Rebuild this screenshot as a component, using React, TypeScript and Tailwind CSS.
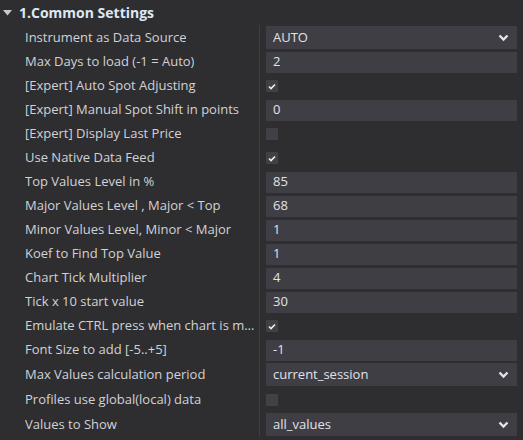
import React from 'react';

type Row =
  | { label: string; kind: 'select'; value: string }
  | { label: string; kind: 'input'; value: string }
  | { label: string; kind: 'check'; checked: boolean };

const rows: Row[] = [
  { label: 'Instrument as Data Source', kind: 'select', value: 'AUTO' },
  { label: 'Max Days to load (-1 = Auto)', kind: 'input', value: '2' },
  { label: '[Expert] Auto Spot Adjusting', kind: 'check', checked: true },
  { label: '[Expert] Manual Spot Shift in points', kind: 'input', value: '0' },
  { label: '[Expert] Display Last Price', kind: 'check', checked: false },
  { label: 'Use Native Data Feed', kind: 'check', checked: true },
  { label: 'Top Values Level in %', kind: 'input', value: '85' },
  { label: 'Major Values Level , Major < Top', kind: 'input', value: '68' },
  { label: 'Minor Values Level, Minor < Major', kind: 'input', value: '1' },
  { label: 'Koef to Find Top Value', kind: 'input', value: '1' },
  { label: 'Chart Tick Multiplier', kind: 'input', value: '4' },
  { label: 'Tick x 10 start value', kind: 'input', value: '30' },
  { label: 'Emulate CTRL press when chart is moved', kind: 'check', checked: true },
  { label: 'Font Size to add [-5..+5]', kind: 'input', value: '-1' },
  { label: 'Max Values calculation period', kind: 'select', value: 'current_session' },
  { label: 'Profiles use global(local) data', kind: 'check', checked: false },
  { label: 'Values to Show', kind: 'select', value: 'all_values' },
];

function Chevron() {
  return (
    <svg width="11" height="8" viewBox="0 0 11 8" className="shrink-0">
      <polyline points="1.5,1.5 5.5,5.5 9.5,1.5" fill="none" stroke="#e4e4e8" strokeWidth="2.4" />
    </svg>
  );
}

function Check({ checked }: { checked: boolean }) {
  return (
    <div className="w-3 h-3 bg-[#414047] flex items-center justify-center">
      {checked && (
        <svg width="8" height="7" viewBox="0 0 8 7">
          <polyline points="1,3.5 3,5.5 7,1.5" fill="none" stroke="#eeeeee" strokeWidth="1.6" />
        </svg>
      )}
    </div>
  );
}

function Editor({ row }: { row: Row }) {
  if (row.kind === 'select') {
    return (
      <div className="h-[23px] bg-[#3f3e45] flex items-center justify-between pl-[7px] pr-[8px] text-[#e2e2e6]">
        <span>{row.value}</span>
        <Chevron />
      </div>
    );
  }
  if (row.kind === 'input') {
    return (
      <div className="h-[21px] bg-[#3f3e45] flex items-center pl-[7px] text-[#e2e2e6]">{row.value}</div>
    );
  }
  return <Check checked={row.checked} />;
}

export default function App() {
  return (
    <div
      className="w-[523px] h-[440px] bg-[#2e2e31] overflow-hidden text-[13px] leading-normal"
      style={{ fontFamily: '"Open Sans", "Noto Sans", sans-serif' }}
    >
      <div className="h-[25px] flex items-center">
        <svg width="9" height="6" viewBox="0 0 9 6" className="ml-[3px] mr-[7px]">
          <polygon points="0,0 9,0 4.5,5.5" fill="#c8c8cc" />
        </svg>
        <span className="font-bold text-[14px] text-[#dfe6f3]">1.Common Settings</span>
      </div>
      {rows.map((row, i) => (
        <div
          key={i}
          className={`flex items-stretch ${row.kind === 'select' || i === 15 ? 'h-[25px]' : 'h-6'}`}
        >
          <div className="w-[259px] shrink-0 flex items-center pl-[25px] pr-[3px] text-[#d2d2d6] min-w-0">
            <span className="truncate">{row.label}</span>
          </div>
          <div className="w-px bg-[#3d3d42]" />
          <div className="flex-1 flex flex-col justify-center pl-[6px] pr-[6px]">
            <Editor row={row} />
          </div>
        </div>
      ))}
    </div>
  );
}
